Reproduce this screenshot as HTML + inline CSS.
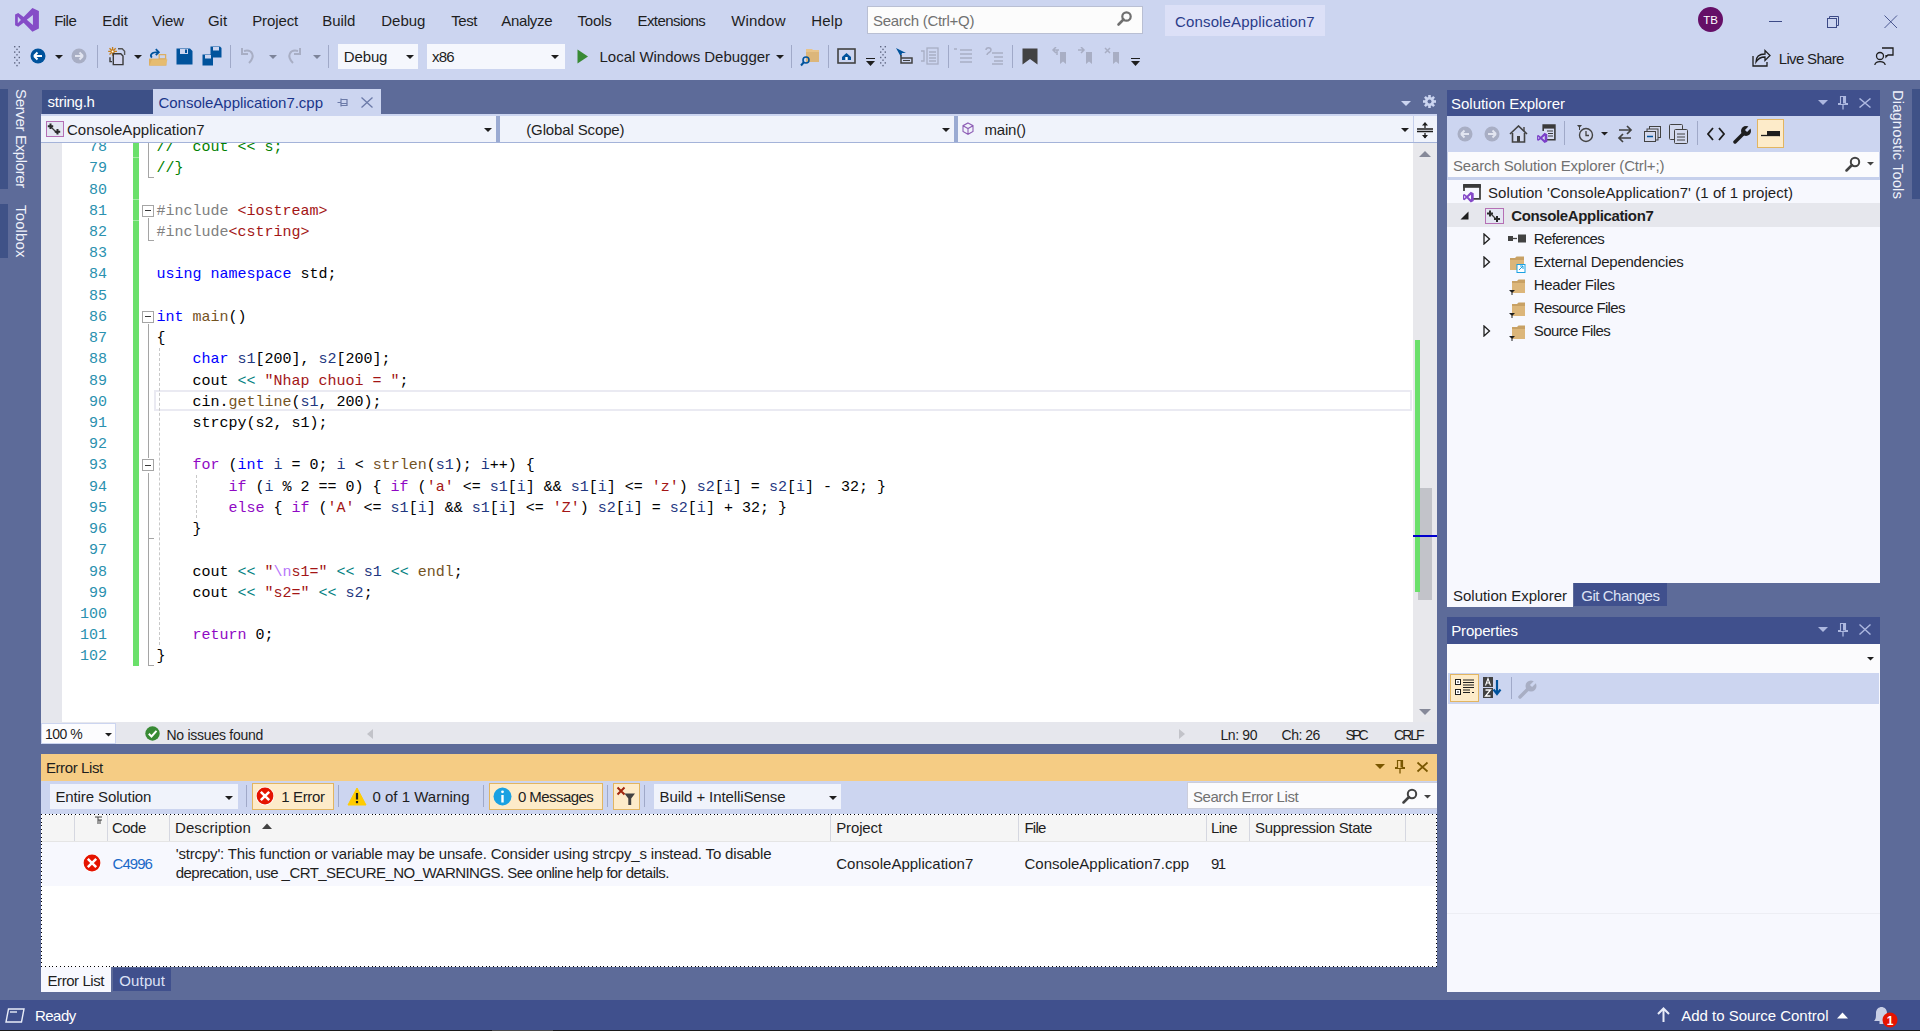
<!DOCTYPE html><html><head><meta charset="utf-8"><style>
html,body{margin:0;padding:0;}
body{width:1920px;height:1031px;position:relative;overflow:hidden;background:#CCD5F0;font-family:"Liberation Sans",sans-serif;}
body div{position:absolute;}
.t{white-space:pre;}
.code{font-family:"Liberation Mono",monospace;font-size:15px;white-space:pre;}
</style></head><body>

<div style="left:0px;top:0px;width:1920px;height:80px;background:#CCD5F0;"></div>
<svg style="position:absolute;left:14px;top:7px;" width="26" height="26" viewBox="0 0 26 26"><path d="M18.4 0.9 L24.9 4.1 V21.6 L18.4 24.8 L9.6 15.7 L4.2 19.7 L1.1 18.2 V7.4 L4.2 5.9 L9.6 10 Z M12.8 12.8 L18.9 7.9 V18 Z M3.8 9.6 L6.9 12.9 L3.8 16.2 Z" fill="#854CC7" fill-rule="evenodd"/></svg>
<div class="t" style="left:54.2px;top:13.30px;font-size:15px;line-height:15px;color:#1e1e1e;font-weight:normal;letter-spacing:-0.542px;">File</div>
<div class="t" style="left:102.3px;top:13.30px;font-size:15px;line-height:15px;color:#1e1e1e;font-weight:normal;letter-spacing:-0.092px;">Edit</div>
<div class="t" style="left:152.0px;top:13.30px;font-size:15px;line-height:15px;color:#1e1e1e;font-weight:normal;letter-spacing:-0.083px;">View</div>
<div class="t" style="left:208.0px;top:13.30px;font-size:15px;line-height:15px;color:#1e1e1e;font-weight:normal;letter-spacing:-0.062px;">Git</div>
<div class="t" style="left:252.2px;top:13.30px;font-size:15px;line-height:15px;color:#1e1e1e;font-weight:normal;letter-spacing:-0.104px;">Project</div>
<div class="t" style="left:322.2px;top:13.30px;font-size:15px;line-height:15px;color:#1e1e1e;font-weight:normal;letter-spacing:-0.019px;">Build</div>
<div class="t" style="left:381.3px;top:13.30px;font-size:15px;line-height:15px;color:#1e1e1e;font-weight:normal;letter-spacing:-0.012px;">Debug</div>
<div class="t" style="left:451.3px;top:13.30px;font-size:15px;line-height:15px;color:#1e1e1e;font-weight:normal;letter-spacing:-0.433px;">Test</div>
<div class="t" style="left:501.25px;top:13.30px;font-size:15px;line-height:15px;color:#1e1e1e;font-weight:normal;letter-spacing:-0.354px;">Analyze</div>
<div class="t" style="left:577.5px;top:13.30px;font-size:15px;line-height:15px;color:#1e1e1e;font-weight:normal;letter-spacing:-0.188px;">Tools</div>
<div class="t" style="left:637.5px;top:13.30px;font-size:15px;line-height:15px;color:#1e1e1e;font-weight:normal;letter-spacing:-0.569px;">Extensions</div>
<div class="t" style="left:731.25px;top:13.30px;font-size:15px;line-height:15px;color:#1e1e1e;font-weight:normal;letter-spacing:0.175px;">Window</div>
<div class="t" style="left:811.25px;top:13.30px;font-size:15px;line-height:15px;color:#1e1e1e;font-weight:normal;letter-spacing:0.125px;">Help</div>
<div style="left:867px;top:6px;width:276px;height:28px;background:#FCFCFC;box-sizing:border-box;border:1px solid #B9BFD3;"></div>
<div class="t" style="left:873.0px;top:13.30px;font-size:15px;line-height:15px;color:#717171;font-weight:normal;letter-spacing:-0.286px;">Search (Ctrl+Q)</div>
<svg style="position:absolute;left:1116px;top:9px;" width="18" height="18" viewBox="0 0 18 18"><circle cx="10.5" cy="7.5" r="4.2" fill="none" stroke="#6F6F6F" stroke-width="2.2"/><path d="M7.5 10.5 L2.5 15.5" stroke="#6F6F6F" stroke-width="2.6" stroke-linecap="round"/></svg>
<div style="left:1165px;top:5px;width:160px;height:31px;background:#DCE0F7;"></div>
<div class="t" style="left:1175.0px;top:14.30px;font-size:15px;line-height:15px;color:#2A3C8A;font-weight:normal;letter-spacing:0.153px;">ConsoleApplication7</div>
<svg style="position:absolute;left:1698px;top:7px;" width="26" height="26" viewBox="0 0 26 26"><circle cx="12.5" cy="12.5" r="12.5" fill="#650F67"/><text x="12.5" y="17" text-anchor="middle" font-family="Liberation Sans" font-size="11.5" fill="#fff">TB</text></svg>
<div style="left:1769px;top:21px;width:13px;height:1px;background:#3C4A86;"></div>
<svg style="position:absolute;left:1826px;top:15px;" width="14" height="14" viewBox="0 0 14 14"><rect x="1.5" y="3.5" width="9" height="9" fill="none" stroke="#3C4A86"/><path d="M3.5 3.5V1.5H12.5V10.5H10.5" fill="none" stroke="#3C4A86"/></svg>
<svg style="position:absolute;left:1884px;top:15px;" width="14" height="14" viewBox="0 0 14 14"><path d="M0.5 0.5L13 13M13 0.5L0.5 13" stroke="#3C4A86" stroke-width="0.9"/></svg>
<svg style="position:absolute;left:14px;top:46px;" width="6" height="21" viewBox="0 0 6 21"><rect x="0" y="0.0" width="1.4" height="1.4" fill="#5F6782"/><rect x="4.6" y="0.0" width="1.4" height="1.4" fill="#5F6782"/><rect x="2.3" y="2.7" width="1.4" height="1.4" fill="#5F6782"/><rect x="0" y="5.4" width="1.4" height="1.4" fill="#5F6782"/><rect x="4.6" y="5.4" width="1.4" height="1.4" fill="#5F6782"/><rect x="2.3" y="8.1" width="1.4" height="1.4" fill="#5F6782"/><rect x="0" y="10.8" width="1.4" height="1.4" fill="#5F6782"/><rect x="4.6" y="10.8" width="1.4" height="1.4" fill="#5F6782"/><rect x="2.3" y="13.5" width="1.4" height="1.4" fill="#5F6782"/><rect x="0" y="16.2" width="1.4" height="1.4" fill="#5F6782"/><rect x="4.6" y="16.2" width="1.4" height="1.4" fill="#5F6782"/><rect x="2.3" y="18.9" width="1.4" height="1.4" fill="#5F6782"/></svg>
<svg style="position:absolute;left:30px;top:48px;" width="16" height="16" viewBox="0 0 16 16"><circle cx="8" cy="8" r="7.5" fill="#00539C"/><path d="M4 8H12M4 8L7.5 4.5M4 8L7.5 11.5" stroke="#fff" stroke-width="2" fill="none"/></svg>
<svg style="position:absolute;left:55.0px;top:55px;" width="8" height="4.5" viewBox="0 0 8 4.5"><path d="M0 0H8L4.0 4.0Z" fill="#1e1e1e"/></svg>
<svg style="position:absolute;left:71px;top:48px;" width="16" height="16" viewBox="0 0 16 16"><circle cx="8" cy="8" r="7.5" fill="#A8AEC4"/><path d="M12 8H4M12 8L8.5 4.5M12 8L8.5 11.5" stroke="#E2E5F0" stroke-width="2" fill="none"/></svg>
<div style="left:97px;top:45px;width:1px;height:23px;background:#A0A9C8;"></div>
<svg style="position:absolute;left:104px;top:44px;" width="24" height="24" viewBox="0 0 24 24"><path d="M8.6 3V11.8M4.2 7.4H13M5.5 4.3L11.7 10.5M11.7 4.3L5.5 10.5" stroke="#C77F1C" stroke-width="1.3"/><circle cx="8.6" cy="7.4" r="1" fill="#fff"/><path d="M14 4.8H18.2L20.6 7.2V11" stroke="#555" stroke-width="1.4" fill="none"/><path d="M9.3 9.8H16.8L19 12V20.6H9.3Z" fill="#D3D6EE" stroke="#3A3A3A" stroke-width="1.4"/><path d="M6 13.2V17.6H8" stroke="#3A3A3A" stroke-width="1.4" fill="none"/></svg>
<svg style="position:absolute;left:133.5px;top:55px;" width="8" height="4.5" viewBox="0 0 8 4.5"><path d="M0 0H8L4.0 4.0Z" fill="#1e1e1e"/></svg>
<svg style="position:absolute;left:147px;top:46px;" width="22" height="22" viewBox="0 0 22 22"><path d="M12.2 8.6H18.6V12.8H12.2Z" fill="none" stroke="#DCAE62" stroke-width="1.3"/><path d="M2 12.6H19.5V19.6H2Z" fill="#DCAE62"/><path d="M2.5 19.6L5 13.5H20.5L18.5 19.6Z" fill="#E6BC70"/><path d="M4.8 11.6C2.5 9 4.5 6.2 11.4 6.2" stroke="#00539C" stroke-width="1.8" fill="none"/><path d="M8.8 3.2L11.8 6.2L8.8 9.2" stroke="#00539C" stroke-width="1.8" fill="none"/></svg>
<svg style="position:absolute;left:176px;top:48px;" width="17" height="17" viewBox="0 0 17 17"><path d="M0.5 0.5H14L16.5 3V16.5H0.5Z" fill="#00539C"/><rect x="4" y="1" width="8" height="5" fill="#CCD5F0"/><rect x="9" y="1.5" width="2" height="3.5" fill="#00539C"/></svg>
<svg style="position:absolute;left:202px;top:46px;" width="20" height="20" viewBox="0 0 20 20"><path d="M8.5 0.5H18L19.5 2V11.5H8.5Z" fill="#00539C"/><rect x="11" y="1" width="6" height="3.5" fill="#CCD5F0"/><path d="M0.5 8.5H9L11 10.5V19.5H0.5Z" fill="#00539C"/><rect x="3" y="9" width="6" height="3.5" fill="#CCD5F0"/></svg>
<div style="left:230px;top:45px;width:1px;height:23px;background:#A0A9C8;"></div>
<svg style="position:absolute;left:240px;top:47px;" width="17" height="18" viewBox="0 0 17 18"><path d="M4 4 C12 2 16 9 9 16" stroke="#A8AEC4" stroke-width="2" fill="none"/><path d="M2 1V7H8" stroke="#A8AEC4" stroke-width="2" fill="none"/></svg>
<svg style="position:absolute;left:268.5px;top:55px;" width="8" height="4.5" viewBox="0 0 8 4.5"><path d="M0 0H8L4.0 4.0Z" fill="#7D8499"/></svg>
<svg style="position:absolute;left:285px;top:47px;" width="17" height="18" viewBox="0 0 17 18"><path d="M13 4 C5 2 1 9 8 16" stroke="#A8AEC4" stroke-width="2" fill="none"/><path d="M15 1V7H9" stroke="#A8AEC4" stroke-width="2" fill="none"/></svg>
<svg style="position:absolute;left:312.5px;top:55px;" width="8" height="4.5" viewBox="0 0 8 4.5"><path d="M0 0H8L4.0 4.0Z" fill="#7D8499"/></svg>
<div style="left:328px;top:45px;width:1px;height:23px;background:#A0A9C8;"></div>
<div style="left:338px;top:44px;width:80px;height:25px;background:#F5F7FD;"></div>
<div class="t" style="left:343.75px;top:49.30px;font-size:15px;line-height:15px;color:#1e1e1e;font-weight:normal;letter-spacing:-0.125px;">Debug</div>
<svg style="position:absolute;left:406.0px;top:55px;" width="8" height="4.5" viewBox="0 0 8 4.5"><path d="M0 0H8L4.0 4.0Z" fill="#1e1e1e"/></svg>
<div style="left:427px;top:44px;width:138px;height:25px;background:#F5F7FD;"></div>
<div class="t" style="left:432.0px;top:49.30px;font-size:15px;line-height:15px;color:#1e1e1e;font-weight:normal;letter-spacing:-0.812px;">x86</div>
<svg style="position:absolute;left:551.0px;top:55px;" width="8" height="4.5" viewBox="0 0 8 4.5"><path d="M0 0H8L4.0 4.0Z" fill="#1e1e1e"/></svg>
<svg style="position:absolute;left:577px;top:49px;" width="12" height="15" viewBox="0 0 12 15"><path d="M0.5 0.5L11 7.5L0.5 14.5Z" fill="#388A34"/></svg>
<div class="t" style="left:599.5px;top:49.30px;font-size:15px;line-height:15px;color:#1e1e1e;font-weight:normal;letter-spacing:-0.018px;">Local Windows Debugger</div>
<svg style="position:absolute;left:776.0px;top:55px;" width="8" height="4.5" viewBox="0 0 8 4.5"><path d="M0 0H8L4.0 4.0Z" fill="#1e1e1e"/></svg>
<div style="left:791px;top:45px;width:1px;height:23px;background:#A0A9C8;"></div>
<svg style="position:absolute;left:800px;top:47px;" width="20" height="20" viewBox="0 0 20 20"><path d="M6 3H11L13 5H19V15H6Z" fill="#DCB67A"/><path d="M6 5V2H12L13 3H19V5" fill="#E8C48A"/><circle cx="6" cy="13" r="3" fill="none" stroke="#00539C" stroke-width="1.6"/><path d="M4 15L1 18.5" stroke="#00539C" stroke-width="2"/></svg>
<div style="left:828px;top:45px;width:1px;height:23px;background:#A0A9C8;"></div>
<svg style="position:absolute;left:837px;top:48px;" width="20" height="17" viewBox="0 0 20 17"><rect x="1" y="1" width="17" height="14" fill="none" stroke="#424242" stroke-width="1.6"/><path d="M5 9L9.5 5L14 9V12H5Z" fill="#00539C"/><rect x="8.3" y="9" width="2.4" height="3" fill="#fff"/></svg>
<svg style="position:absolute;left:865px;top:57px;" width="11" height="11" viewBox="0 0 11 11"><path d="M1 1.5H10" stroke="#1e1e1e"/><path d="M1 4H10L5.5 9Z" fill="#1e1e1e"/></svg>
<svg style="position:absolute;left:880px;top:46px;" width="6" height="22" viewBox="0 0 6 22"><rect x="0" y="0.0" width="1.4" height="1.4" fill="#5F6782"/><rect x="4.6" y="0.0" width="1.4" height="1.4" fill="#5F6782"/><rect x="2.3" y="2.7" width="1.4" height="1.4" fill="#5F6782"/><rect x="0" y="5.4" width="1.4" height="1.4" fill="#5F6782"/><rect x="4.6" y="5.4" width="1.4" height="1.4" fill="#5F6782"/><rect x="2.3" y="8.1" width="1.4" height="1.4" fill="#5F6782"/><rect x="0" y="10.8" width="1.4" height="1.4" fill="#5F6782"/><rect x="4.6" y="10.8" width="1.4" height="1.4" fill="#5F6782"/><rect x="2.3" y="13.5" width="1.4" height="1.4" fill="#5F6782"/><rect x="0" y="16.2" width="1.4" height="1.4" fill="#5F6782"/><rect x="4.6" y="16.2" width="1.4" height="1.4" fill="#5F6782"/><rect x="2.3" y="18.9" width="1.4" height="1.4" fill="#5F6782"/></svg>
<svg style="position:absolute;left:894px;top:47px;" width="20" height="18" viewBox="0 0 20 18"><path d="M2 1L7 10L8 6L12 6Z" fill="#00539C"/><path d="M7 8V11H18V16H7V11" fill="none" stroke="#424242" stroke-width="1.5"/><path d="M9 13.5H16" stroke="#424242"/></svg>
<svg style="position:absolute;left:920px;top:47px;" width="20" height="18" viewBox="0 0 20 18"><g stroke="#A8AEC4" fill="none" stroke-width="1.3"><path d="M1 4H4V14H1"/><rect x="7" y="1" width="11" height="16"/><path d="M9 5H16M9 8H16M9 11H16M9 14H16"/></g></svg>
<div style="left:948px;top:45px;width:1px;height:23px;background:#A0A9C8;"></div>
<svg style="position:absolute;left:952px;top:47px;" width="22" height="18" viewBox="0 0 22 18"><g stroke="#A8AEC4" stroke-width="1.5"><path d="M8 3H20M8 7H20M8 11H20M8 15H20"/><path d="M2 2H5"/></g></svg>
<svg style="position:absolute;left:984px;top:47px;" width="20" height="18" viewBox="0 0 20 18"><g stroke="#A8AEC4" stroke-width="1.5" fill="none"><path d="M8 6H19M10 10H19M10 14H19M8 17H19"/><path d="M2 3C2 0 7 0 7 3C7 6 3 5 3 8"/></g></svg>
<div style="left:1012px;top:45px;width:1px;height:23px;background:#A0A9C8;"></div>
<svg style="position:absolute;left:1022px;top:48px;" width="16" height="17" viewBox="0 0 16 17"><path d="M0.5 0.5H15.5V16.5L8 11L0.5 16.5Z" fill="#424242"/></svg>
<svg style="position:absolute;left:1051px;top:47px;" width="17" height="18" viewBox="0 0 17 18"><path d="M9 5H15V17L12 14.5L9 17Z" fill="#A8AEC4"/><path d="M8 3H2M5 0L2 3L5 6M6 3V8" stroke="#A8AEC4" stroke-width="1.5" fill="none"/></svg>
<svg style="position:absolute;left:1077px;top:47px;" width="17" height="18" viewBox="0 0 17 18"><path d="M9 5H15V17L12 14.5L9 17Z" fill="#A8AEC4"/><path d="M1 3H7M4 0L7 3L4 6" stroke="#A8AEC4" stroke-width="1.5" fill="none"/></svg>
<svg style="position:absolute;left:1104px;top:47px;" width="17" height="18" viewBox="0 0 17 18"><path d="M9 5H15V17L12 14.5L9 17Z" fill="#A8AEC4"/><path d="M1 1L6 6M6 1L1 6" stroke="#A8AEC4" stroke-width="1.5" fill="none"/></svg>
<svg style="position:absolute;left:1130px;top:57px;" width="11" height="11" viewBox="0 0 11 11"><path d="M1 1.5H10" stroke="#1e1e1e"/><path d="M1 4H10L5.5 9Z" fill="#1e1e1e"/></svg>
<svg style="position:absolute;left:1752px;top:48px;" width="19" height="19" viewBox="0 0 19 19"><path d="M1 8V18H15V14" stroke="#1e1e1e" stroke-width="1.3" fill="none"/><path d="M4 14C4 8 8 6 13 6V2.5L18 7.5L13 12.5V9C9 9 6 10.5 4 14Z" fill="none" stroke="#1e1e1e" stroke-width="1.3"/></svg>
<div class="t" style="left:1778.75px;top:51.30px;font-size:15px;line-height:15px;color:#1e1e1e;font-weight:normal;letter-spacing:-0.667px;">Live Share</div>
<svg style="position:absolute;left:1874px;top:47px;" width="20" height="20" viewBox="0 0 20 20"><circle cx="6" cy="9" r="3.5" fill="none" stroke="#1e1e1e" stroke-width="1.3"/><path d="M0.8 18C1.5 13.5 10.5 13.5 11.2 18" fill="none" stroke="#1e1e1e" stroke-width="1.3"/><path d="M8 1H19V8H14L12 10V8" fill="none" stroke="#1e1e1e" stroke-width="1.3"/></svg>
<div style="left:0px;top:80px;width:1920px;height:920px;background:#5D6B99;"></div>
<div style="left:0px;top:89px;width:8px;height:100px;background:#3F5287;"></div>
<div style="left:0px;top:204px;width:8px;height:54px;background:#3F5287;"></div>
<div class="t" style="left:11px;top:89.2px;writing-mode:vertical-rl;font-size:15px;line-height:20px;color:#F0F2FA;letter-spacing:-0.346px;">Server Explorer</div>
<div class="t" style="left:11px;top:205.0px;writing-mode:vertical-rl;font-size:15px;line-height:20px;color:#F0F2FA;letter-spacing:0.142px;">Toolbox</div>
<div style="left:42px;top:90px;width:111px;height:24px;background:#3D5087;"></div>
<div class="t" style="left:47.5px;top:94.30px;font-size:15px;line-height:15px;color:#FFFFFF;font-weight:normal;letter-spacing:-0.250px;">string.h</div>
<div style="left:153px;top:89px;width:228px;height:25px;background:#CCD5F0;"></div>
<div class="t" style="left:158.5px;top:95.30px;font-size:15px;line-height:15px;color:#1B358A;font-weight:normal;letter-spacing:-0.028px;">ConsoleApplication7.cpp</div>
<svg style="position:absolute;left:337px;top:97px;" width="12" height="11" viewBox="0 0 12 11"><path d="M0.5 5.5H4M4 1.5V9.5M4 2.5H10V8.5H4M4 6.5H10" stroke="#6B7AA8" stroke-width="1.2" fill="none"/></svg>
<svg style="position:absolute;left:361px;top:97px;" width="12" height="11" viewBox="0 0 12 11"><path d="M0.5 0.5L11.5 10.5M11.5 0.5L0.5 10.5" stroke="#6B7AA8" stroke-width="1.3"/></svg>
<svg style="position:absolute;left:1400.5px;top:101px;" width="10" height="5.5" viewBox="0 0 10 5.5"><path d="M0 0H10L5.0 5.0Z" fill="#CCD5F0"/></svg>
<svg style="position:absolute;left:1423px;top:95px;" width="13" height="13" viewBox="0 0 13 13"><g fill="#CCD5F0"><circle cx="6.5" cy="6.5" r="4.6"/><rect x="5.2" y="0" width="2.6" height="13" transform="rotate(0 6.5 6.5)"/><rect x="5.2" y="0" width="2.6" height="13" transform="rotate(45 6.5 6.5)"/><rect x="5.2" y="0" width="2.6" height="13" transform="rotate(90 6.5 6.5)"/><rect x="5.2" y="0" width="2.6" height="13" transform="rotate(135 6.5 6.5)"/></g><circle cx="6.5" cy="6.5" r="2" fill="#5D6B99"/></svg>
<div style="left:41px;top:114px;width:1396px;height:2px;background:#CCD5F0;"></div>
<div style="left:41px;top:116px;width:1396px;height:26px;background:#F0F3FB;"></div>
<div style="left:41px;top:142px;width:1396px;height:1px;background:#A4B3D9;"></div>
<div style="left:496px;top:116px;width:4px;height:26px;background:#9AAAD2;"></div>
<div style="left:954px;top:116px;width:4px;height:26px;background:#9AAAD2;"></div>
<div style="left:1413px;top:116px;width:1px;height:26px;background:#C6D0EC;"></div>
<svg style="position:absolute;left:46px;top:121px;" width="18" height="16" viewBox="0 0 18 16"><rect x="0.5" y="0.5" width="17" height="15" fill="#E4E6F2" stroke="#B56FB5"/><path d="M4 5L11 12" stroke="#3a3a3a" stroke-width="1.3"/><path d="M4.5 2.5V8M1.8 5.3H7.2M11.5 8V13.5M8.8 10.8H14.2" stroke="#2a2a2a" stroke-width="2"/></svg>
<div class="t" style="left:67.0px;top:122.30px;font-size:15px;line-height:15px;color:#1e1e1e;font-weight:normal;letter-spacing:0.042px;">ConsoleApplication7</div>
<svg style="position:absolute;left:483.5px;top:127.5px;" width="8" height="4.5" viewBox="0 0 8 4.5"><path d="M0 0H8L4.0 4.0Z" fill="#1e1e1e"/></svg>
<div class="t" style="left:526.25px;top:122.30px;font-size:15px;line-height:15px;color:#1e1e1e;font-weight:normal;letter-spacing:-0.135px;">(Global Scope)</div>
<svg style="position:absolute;left:941.5px;top:128px;" width="8" height="4.5" viewBox="0 0 8 4.5"><path d="M0 0H8L4.0 4.0Z" fill="#1e1e1e"/></svg>
<svg style="position:absolute;left:962px;top:122px;" width="12" height="14" viewBox="0 0 12 14"><path d="M6 1L11 3.7V9.5L6 12.3L1 9.5V3.7Z M1 3.7L6 6.5L11 3.7M6 6.5V12.3" stroke="#8E5EB5" stroke-width="1.1" fill="none"/></svg>
<div class="t" style="left:984.6px;top:122.30px;font-size:15px;line-height:15px;color:#1e1e1e;font-weight:normal;letter-spacing:-0.220px;">main()</div>
<svg style="position:absolute;left:1400.5px;top:128px;" width="8" height="4.5" viewBox="0 0 8 4.5"><path d="M0 0H8L4.0 4.0Z" fill="#1e1e1e"/></svg>
<svg style="position:absolute;left:1416px;top:121px;" width="18" height="18" viewBox="0 0 18 18"><path d="M1 8H17M1 10.5H17" stroke="#1e1e1e" stroke-width="1.5"/><path d="M9 2V7M9 12V17" stroke="#1e1e1e" stroke-width="1.3"/><path d="M6 4.5L9 1L12 4.5Z M6 14L9 17.5L12 14Z" fill="#1e1e1e"/></svg>
<div style="left:41px;top:143px;width:1373px;height:579px;background:#FFFFFF;"></div>
<div style="left:41px;top:143px;width:21px;height:579px;background:#E6E7ED;"></div>
<div style="left:1413px;top:143px;width:24px;height:579px;background:#E8E8EC;"></div>
<svg style="position:absolute;left:1419px;top:150px;" width="12" height="8" viewBox="0 0 12 8"><path d="M0 7L6 1L12 7Z" fill="#868999"/></svg>
<svg style="position:absolute;left:1419px;top:709px;" width="12" height="7" viewBox="0 0 12 7"><path d="M0 0H12L6 6Z" fill="#868999"/></svg>
<div style="left:1418px;top:488px;width:14px;height:112px;background:#C2C3C9;"></div>
<div style="left:1415px;top:340px;width:5px;height:252px;background:#6BE06B;"></div>
<div style="left:1413px;top:535px;width:24px;height:2px;background:#0000CD;"></div>
<div style="left:41px;top:143px;width:1372px;height:579px;overflow:hidden;">
<div style="left:113px;top:247.48px;width:1258px;height:21px;box-sizing:border-box;border:2px solid #EAEAF2;"></div>
<div style="left:92px;top:0px;width:6px;height:523.34px;background:#6BE06B;"></div>
<div style="left:92px;top:13.56px;width:6px;height:1px;background:#A6EBA6;"></div>
<div style="left:92px;top:56.00px;width:6px;height:1px;background:#A6EBA6;"></div>
<div style="left:92px;top:77.22px;width:6px;height:1px;background:#A6EBA6;"></div>
<div class="code" style="left:21px;top:-5.86px;width:45px;text-align:right;line-height:21.22px;color:#2B91AF;">78</div>
<div class="code" style="left:115.5px;top:-5.86px;line-height:21.22px;color:#000;"><span style="color:#008000">//  cout &lt;&lt; s;</span></div>
<div class="code" style="left:21px;top:15.36px;width:45px;text-align:right;line-height:21.22px;color:#2B91AF;">79</div>
<div class="code" style="left:115.5px;top:15.36px;line-height:21.22px;color:#000;"><span style="color:#008000">//}</span></div>
<div class="code" style="left:21px;top:36.58px;width:45px;text-align:right;line-height:21.22px;color:#2B91AF;">80</div>
<div class="code" style="left:115.5px;top:36.58px;line-height:21.22px;color:#000;"></div>
<div class="code" style="left:21px;top:57.80px;width:45px;text-align:right;line-height:21.22px;color:#2B91AF;">81</div>
<div class="code" style="left:115.5px;top:57.80px;line-height:21.22px;color:#000;"><span style="color:#808080">#include </span><span style="color:#A31515">&lt;iostream&gt;</span></div>
<div class="code" style="left:21px;top:79.02px;width:45px;text-align:right;line-height:21.22px;color:#2B91AF;">82</div>
<div class="code" style="left:115.5px;top:79.02px;line-height:21.22px;color:#000;"><span style="color:#808080">#include</span><span style="color:#A31515">&lt;cstring&gt;</span></div>
<div class="code" style="left:21px;top:100.24px;width:45px;text-align:right;line-height:21.22px;color:#2B91AF;">83</div>
<div class="code" style="left:115.5px;top:100.24px;line-height:21.22px;color:#000;"></div>
<div class="code" style="left:21px;top:121.46px;width:45px;text-align:right;line-height:21.22px;color:#2B91AF;">84</div>
<div class="code" style="left:115.5px;top:121.46px;line-height:21.22px;color:#000;"><span style="color:#0000FF">using</span> <span style="color:#0000FF">namespace</span> std;</div>
<div class="code" style="left:21px;top:142.68px;width:45px;text-align:right;line-height:21.22px;color:#2B91AF;">85</div>
<div class="code" style="left:115.5px;top:142.68px;line-height:21.22px;color:#000;"></div>
<div class="code" style="left:21px;top:163.90px;width:45px;text-align:right;line-height:21.22px;color:#2B91AF;">86</div>
<div class="code" style="left:115.5px;top:163.90px;line-height:21.22px;color:#000;"><span style="color:#0000FF">int</span> <span style="color:#74531F">main</span>()</div>
<div class="code" style="left:21px;top:185.12px;width:45px;text-align:right;line-height:21.22px;color:#2B91AF;">87</div>
<div class="code" style="left:115.5px;top:185.12px;line-height:21.22px;color:#000;">{</div>
<div class="code" style="left:21px;top:206.34px;width:45px;text-align:right;line-height:21.22px;color:#2B91AF;">88</div>
<div class="code" style="left:115.5px;top:206.34px;line-height:21.22px;color:#000;">    <span style="color:#0000FF">char</span> <span style="color:#1F377F">s1</span>[200], <span style="color:#1F377F">s2</span>[200];</div>
<div class="code" style="left:21px;top:227.56px;width:45px;text-align:right;line-height:21.22px;color:#2B91AF;">89</div>
<div class="code" style="left:115.5px;top:227.56px;line-height:21.22px;color:#000;">    cout <span style="color:#008080">&lt;&lt;</span> <span style="color:#A31515">&quot;Nhap chuoi = &quot;</span>;</div>
<div class="code" style="left:21px;top:248.78px;width:45px;text-align:right;line-height:21.22px;color:#2B91AF;">90</div>
<div class="code" style="left:115.5px;top:248.78px;line-height:21.22px;color:#000;">    cin.<span style="color:#74531F">getline</span>(<span style="color:#1F377F">s1</span>, 200);</div>
<div class="code" style="left:21px;top:270.00px;width:45px;text-align:right;line-height:21.22px;color:#2B91AF;">91</div>
<div class="code" style="left:115.5px;top:270.00px;line-height:21.22px;color:#000;">    strcpy(s2, s1);</div>
<div class="code" style="left:21px;top:291.22px;width:45px;text-align:right;line-height:21.22px;color:#2B91AF;">92</div>
<div class="code" style="left:115.5px;top:291.22px;line-height:21.22px;color:#000;"></div>
<div class="code" style="left:21px;top:312.44px;width:45px;text-align:right;line-height:21.22px;color:#2B91AF;">93</div>
<div class="code" style="left:115.5px;top:312.44px;line-height:21.22px;color:#000;">    <span style="color:#8F08C4">for</span> (<span style="color:#0000FF">int</span> <span style="color:#1F377F">i</span> = 0; <span style="color:#1F377F">i</span> &lt; <span style="color:#74531F">strlen</span>(<span style="color:#1F377F">s1</span>); <span style="color:#1F377F">i</span>++) {</div>
<div class="code" style="left:21px;top:333.66px;width:45px;text-align:right;line-height:21.22px;color:#2B91AF;">94</div>
<div class="code" style="left:115.5px;top:333.66px;line-height:21.22px;color:#000;">        <span style="color:#8F08C4">if</span> (<span style="color:#1F377F">i</span> % 2 == 0) { <span style="color:#8F08C4">if</span> (<span style="color:#A31515">&#x27;a&#x27;</span> &lt;= <span style="color:#1F377F">s1</span>[<span style="color:#1F377F">i</span>] &amp;&amp; <span style="color:#1F377F">s1</span>[<span style="color:#1F377F">i</span>] &lt;= <span style="color:#A31515">&#x27;z&#x27;</span>) <span style="color:#1F377F">s2</span>[<span style="color:#1F377F">i</span>] = <span style="color:#1F377F">s2</span>[<span style="color:#1F377F">i</span>] - 32; }</div>
<div class="code" style="left:21px;top:354.88px;width:45px;text-align:right;line-height:21.22px;color:#2B91AF;">95</div>
<div class="code" style="left:115.5px;top:354.88px;line-height:21.22px;color:#000;">        <span style="color:#8F08C4">else</span> { <span style="color:#8F08C4">if</span> (<span style="color:#A31515">&#x27;A&#x27;</span> &lt;= <span style="color:#1F377F">s1</span>[<span style="color:#1F377F">i</span>] &amp;&amp; <span style="color:#1F377F">s1</span>[<span style="color:#1F377F">i</span>] &lt;= <span style="color:#A31515">&#x27;Z&#x27;</span>) <span style="color:#1F377F">s2</span>[<span style="color:#1F377F">i</span>] = <span style="color:#1F377F">s2</span>[<span style="color:#1F377F">i</span>] + 32; }</div>
<div class="code" style="left:21px;top:376.10px;width:45px;text-align:right;line-height:21.22px;color:#2B91AF;">96</div>
<div class="code" style="left:115.5px;top:376.10px;line-height:21.22px;color:#000;">    }</div>
<div class="code" style="left:21px;top:397.32px;width:45px;text-align:right;line-height:21.22px;color:#2B91AF;">97</div>
<div class="code" style="left:115.5px;top:397.32px;line-height:21.22px;color:#000;"></div>
<div class="code" style="left:21px;top:418.54px;width:45px;text-align:right;line-height:21.22px;color:#2B91AF;">98</div>
<div class="code" style="left:115.5px;top:418.54px;line-height:21.22px;color:#000;">    cout <span style="color:#008080">&lt;&lt;</span> <span style="color:#A31515">&quot;</span><span style="color:#B776FB">\n</span><span style="color:#A31515">s1=&quot;</span> <span style="color:#008080">&lt;&lt;</span> <span style="color:#1F377F">s1</span> <span style="color:#008080">&lt;&lt;</span> <span style="color:#74531F">endl</span>;</div>
<div class="code" style="left:21px;top:439.76px;width:45px;text-align:right;line-height:21.22px;color:#2B91AF;">99</div>
<div class="code" style="left:115.5px;top:439.76px;line-height:21.22px;color:#000;">    cout <span style="color:#008080">&lt;&lt;</span> <span style="color:#A31515">&quot;s2=&quot;</span> <span style="color:#008080">&lt;&lt;</span> <span style="color:#1F377F">s2</span>;</div>
<div class="code" style="left:21px;top:460.98px;width:45px;text-align:right;line-height:21.22px;color:#2B91AF;">100</div>
<div class="code" style="left:115.5px;top:460.98px;line-height:21.22px;color:#000;"></div>
<div class="code" style="left:21px;top:482.20px;width:45px;text-align:right;line-height:21.22px;color:#2B91AF;">101</div>
<div class="code" style="left:115.5px;top:482.20px;line-height:21.22px;color:#000;">    <span style="color:#8F08C4">return</span> 0;</div>
<div class="code" style="left:21px;top:503.42px;width:45px;text-align:right;line-height:21.22px;color:#2B91AF;">102</div>
<div class="code" style="left:115.5px;top:503.42px;line-height:21.22px;color:#000;">}</div>
<div style="left:107px;top:0.00px;width:1px;height:33.78px;background:#A5A5A5;"></div>
<div style="left:107px;top:33.78px;width:6px;height:1px;background:#A5A5A5;"></div>
<div style="left:101px;top:61.50px;width:12px;height:12px;box-sizing:border-box;border:1px solid #A5A5A5;background:#fff;"></div>
<div style="left:104px;top:67.00px;width:6px;height:1.3px;background:#3a3a3a;"></div>
<div style="left:107px;top:75.00px;width:1px;height:22.44px;background:#A5A5A5;"></div>
<div style="left:107px;top:97.44px;width:6px;height:1px;background:#A5A5A5;"></div>
<div style="left:101px;top:167.60px;width:12px;height:12px;box-sizing:border-box;border:1px solid #A5A5A5;background:#fff;"></div>
<div style="left:104px;top:173.10px;width:6px;height:1.3px;background:#3a3a3a;"></div>
<div style="left:107px;top:181.10px;width:1px;height:133.54px;background:#A5A5A5;"></div>
<div style="left:107px;top:396.02px;width:1px;height:125.82px;background:#A5A5A5;"></div>
<div style="left:107px;top:521.84px;width:6px;height:1px;background:#A5A5A5;"></div>
<div style="left:101px;top:316.14px;width:12px;height:12px;box-sizing:border-box;border:1px solid #A5A5A5;background:#fff;"></div>
<div style="left:104px;top:321.64px;width:6px;height:1.3px;background:#3a3a3a;"></div>
<div style="left:107px;top:329.64px;width:1px;height:64.88px;background:#A5A5A5;"></div>
<div style="left:107px;top:394.52px;width:6px;height:1px;background:#A5A5A5;"></div>
<div style="left:118px;top:205.04px;width:0;height:297.08px;border-left:1px dashed #C8C8C8;"></div>
<div style="left:155px;top:332.36px;width:0;height:42.44px;border-left:1px dashed #C8C8C8;"></div>
</div>
<div style="left:41px;top:722px;width:1396px;height:22px;background:#E6E7ED;"></div>
<div style="left:41px;top:723px;width:75px;height:21px;background:#FCFCFE;box-sizing:border-box;border:1px solid #CCD5F0;"></div>
<div class="t" style="left:45.0px;top:727.15px;font-size:14px;line-height:14px;color:#1e1e1e;font-weight:normal;letter-spacing:-0.488px;">100 %</div>
<svg style="position:absolute;left:105.0px;top:732.5px;" width="7" height="4.0" viewBox="0 0 7 4.0"><path d="M0 0H7L3.5 3.5Z" fill="#1e1e1e"/></svg>
<svg style="position:absolute;left:145px;top:726px;" width="15" height="15" viewBox="0 0 15 15"><circle cx="7.5" cy="7.5" r="7.2" fill="#388A34"/><path d="M3.8 7.8L6.5 10.5L11.5 4.8" stroke="#fff" stroke-width="2" fill="none"/></svg>
<div class="t" style="left:166.4px;top:728.15px;font-size:14px;line-height:14px;color:#1e1e1e;font-weight:normal;letter-spacing:-0.241px;">No issues found</div>
<svg style="position:absolute;left:367px;top:729px;" width="6" height="10" viewBox="0 0 6 10"><path d="M6 0V10L0 5Z" fill="#C2C3C9"/></svg>
<svg style="position:absolute;left:1179px;top:729px;" width="6" height="10" viewBox="0 0 6 10"><path d="M0 0V10L6 5Z" fill="#C2C3C9"/></svg>
<div class="t" style="left:1220.4px;top:728.15px;font-size:14px;line-height:14px;color:#1e1e1e;font-weight:normal;letter-spacing:-0.375px;">Ln: 90</div>
<div class="t" style="left:1281.6px;top:728.15px;font-size:14px;line-height:14px;color:#1e1e1e;font-weight:normal;letter-spacing:-0.490px;">Ch: 26</div>
<div class="t" style="left:1345.5px;top:728.15px;font-size:14px;line-height:14px;color:#1e1e1e;font-weight:normal;letter-spacing:-2.875px;">SPC</div>
<div class="t" style="left:1394.0px;top:728.15px;font-size:14px;line-height:14px;color:#1e1e1e;font-weight:normal;letter-spacing:-1.975px;">CRLF</div>
<div style="left:41px;top:754px;width:1396px;height:27px;background:#F5CC84;"></div>
<div class="t" style="left:45.9px;top:760.30px;font-size:15px;line-height:15px;color:#1e1e1e;font-weight:normal;letter-spacing:-0.397px;">Error List</div>
<svg style="position:absolute;left:1374.5px;top:764px;" width="10" height="5.5" viewBox="0 0 10 5.5"><path d="M0 0H10L5.0 5.0Z" fill="#7A5700"/></svg>
<svg style="position:absolute;left:1395px;top:760px;" width="10" height="14" viewBox="0 0 10 14"><path d="M2.5 0.5H7.5V7.5H9.5V8.5H0.5V7.5H2.5Z" fill="none" stroke="#7A5700" stroke-width="1.2"/><path d="M5 8.5V13.5" stroke="#7A5700" stroke-width="1.3"/><rect x="5.5" y="1" width="1.8" height="6.5" fill="#7A5700"/></svg>
<svg style="position:absolute;left:1416px;top:761px;" width="13" height="12" viewBox="0 0 13 12"><path d="M1.5 1.5L11.5 10.5M11.5 1.5L1.5 10.5" stroke="#7A5700" stroke-width="1.7"/></svg>
<div style="left:41px;top:781px;width:1396px;height:33px;background:#CCD5F0;"></div>
<div style="left:50px;top:784px;width:188px;height:25px;background:#F0F3FB;"></div>
<div class="t" style="left:55.4px;top:789.30px;font-size:15px;line-height:15px;color:#1e1e1e;font-weight:normal;letter-spacing:-0.107px;">Entire Solution</div>
<svg style="position:absolute;left:224.5px;top:796px;" width="8" height="4.5" viewBox="0 0 8 4.5"><path d="M0 0H8L4.0 4.0Z" fill="#1e1e1e"/></svg>
<div style="left:246px;top:785px;width:1px;height:22px;background:#A0A9C8;"></div>
<div style="left:252px;top:783px;width:82px;height:27px;background:#FDEBC9;box-sizing:border-box;border:1px solid #E2B561;"></div>
<svg style="position:absolute;left:255px;top:786px;" width="20" height="20" viewBox="0 0 20 20"><circle cx="10" cy="10" r="9.2" fill="#fff"/><circle cx="10" cy="10" r="8.4" fill="#E51400"/><path d="M5.8 5.8L14.2 14.2M14.2 5.8L5.8 14.2" stroke="#fff" stroke-width="2.5"/></svg>
<div class="t" style="left:281.25px;top:789.30px;font-size:15px;line-height:15px;color:#1e1e1e;font-weight:normal;letter-spacing:-0.354px;">1 Error</div>
<div style="left:338px;top:785px;width:1px;height:22px;background:#A0A9C8;"></div>
<svg style="position:absolute;left:347px;top:787px;" width="20" height="19" viewBox="0 0 20 19"><path d="M10 1L19 18H1Z" fill="#FFCC00" stroke="#FFCC00" stroke-linejoin="round"/><path d="M10 6V12.5" stroke="#1e1e1e" stroke-width="2.2"/><rect x="8.9" y="14" width="2.2" height="2.2" fill="#1e1e1e"/></svg>
<div class="t" style="left:372.5px;top:789.30px;font-size:15px;line-height:15px;color:#1e1e1e;font-weight:normal;letter-spacing:0.000px;">0 of 1 Warning</div>
<div style="left:483px;top:785px;width:1px;height:22px;background:#A0A9C8;"></div>
<div style="left:489px;top:783px;width:114px;height:27px;background:#FDEBC9;box-sizing:border-box;border:1px solid #E2B561;"></div>
<svg style="position:absolute;left:493px;top:787px;" width="19" height="19" viewBox="0 0 19 19"><circle cx="9.5" cy="9.5" r="9" fill="#1BA1E2"/><path d="M9.5 8V15.5" stroke="#fff" stroke-width="2.4"/><circle cx="9.5" cy="4.8" r="1.4" fill="#fff"/></svg>
<div class="t" style="left:518.0px;top:789.30px;font-size:15px;line-height:15px;color:#1e1e1e;font-weight:normal;letter-spacing:-0.569px;">0 Messages</div>
<div style="left:607px;top:785px;width:1px;height:22px;background:#A0A9C8;"></div>
<div style="left:613px;top:783px;width:27px;height:27px;background:#FDEBC9;box-sizing:border-box;border:1px solid #E2B561;"></div>
<svg style="position:absolute;left:616px;top:786px;" width="20" height="20" viewBox="0 0 20 20"><path d="M1.5 1.5L8.5 8.5M8.5 1.5L1.5 8.5" stroke="#A1260D" stroke-width="2"/><path d="M8.5 7.5H19L15.2 12.5V19H12.3V12.5Z" fill="#424242"/></svg>
<div style="left:644px;top:785px;width:1px;height:22px;background:#A0A9C8;"></div>
<div style="left:654px;top:784px;width:187px;height:25px;background:#F0F3FB;"></div>
<div class="t" style="left:659.5px;top:789.30px;font-size:15px;line-height:15px;color:#1e1e1e;font-weight:normal;letter-spacing:-0.105px;">Build + IntelliSense</div>
<svg style="position:absolute;left:828.5px;top:796px;" width="8" height="4.5" viewBox="0 0 8 4.5"><path d="M0 0H8L4.0 4.0Z" fill="#1e1e1e"/></svg>
<div style="left:1187px;top:782px;width:250px;height:27px;background:#FBFBFD;box-sizing:border-box;border:1px solid #CCCEDB;border-right:none;"></div>
<div class="t" style="left:1192.9px;top:789.30px;font-size:15px;line-height:15px;color:#717171;font-weight:normal;letter-spacing:-0.425px;">Search Error List</div>
<svg style="position:absolute;left:1401px;top:788px;" width="18" height="16" viewBox="0 0 18 16"><circle cx="11" cy="6" r="4.2" fill="none" stroke="#424242" stroke-width="2"/><path d="M8 9L2.5 14.5" stroke="#424242" stroke-width="2.5" stroke-linecap="round"/></svg>
<svg style="position:absolute;left:1423.5px;top:795px;" width="7" height="4.0" viewBox="0 0 7 4.0"><path d="M0 0H7L3.5 3.5Z" fill="#424242"/></svg>
<div style="left:41px;top:814px;width:1396px;height:153px;background:#FFFFFF;"></div>
<div style="left:41px;top:814px;width:1396px;height:1px;background:repeating-linear-gradient(to right,#000 0 1px,#fff 1px 3.8px);"></div>
<div style="left:41px;top:966px;width:1396px;height:1px;background:repeating-linear-gradient(to right,#000 0 1px,#fff 1px 3.8px);"></div>
<div style="left:41px;top:814px;width:1px;height:153px;background:repeating-linear-gradient(to bottom,#000 0 1px,#fff 1px 3.8px);"></div>
<div style="left:1436px;top:814px;width:1px;height:153px;background:repeating-linear-gradient(to bottom,#000 0 1px,#fff 1px 3.8px);"></div>
<div style="left:42px;top:815px;width:1394px;height:26px;background:#F5F5F5;"></div>
<div style="left:42px;top:841px;width:1394px;height:1px;background:#E5E5E5;"></div>
<div style="left:74px;top:815px;width:1px;height:26px;background:#D5D7E0;"></div>
<div style="left:107px;top:815px;width:1px;height:26px;background:#D5D7E0;"></div>
<div style="left:169px;top:815px;width:1px;height:26px;background:#D5D7E0;"></div>
<div style="left:830px;top:815px;width:1px;height:26px;background:#D5D7E0;"></div>
<div style="left:1018px;top:815px;width:1px;height:26px;background:#D5D7E0;"></div>
<div style="left:1206px;top:815px;width:1px;height:26px;background:#D5D7E0;"></div>
<div style="left:1249px;top:815px;width:1px;height:26px;background:#D5D7E0;"></div>
<div style="left:1405px;top:815px;width:1px;height:26px;background:#D5D7E0;"></div>
<svg style="position:absolute;left:94px;top:816px;" width="9" height="9" viewBox="0 0 9 9"><path d="M1 1H8M4 1V8M4 4H8M6 4V8" stroke="#424242" stroke-width="1"/></svg>
<div class="t" style="left:112.0px;top:820.30px;font-size:15px;line-height:15px;color:#1e1e1e;font-weight:normal;letter-spacing:-0.542px;">Code</div>
<div class="t" style="left:175.0px;top:820.30px;font-size:15px;line-height:15px;color:#1e1e1e;font-weight:normal;letter-spacing:0.075px;">Description</div>
<svg style="position:absolute;left:262px;top:823px;" width="10" height="6" viewBox="0 0 10 6"><path d="M0 6L5 0.5L10 6Z" fill="#424242"/></svg>
<div class="t" style="left:836.25px;top:820.30px;font-size:15px;line-height:15px;color:#1e1e1e;font-weight:normal;letter-spacing:-0.146px;">Project</div>
<div class="t" style="left:1024.5px;top:820.30px;font-size:15px;line-height:15px;color:#1e1e1e;font-weight:normal;letter-spacing:-0.808px;">File</div>
<div class="t" style="left:1211.0px;top:820.30px;font-size:15px;line-height:15px;color:#1e1e1e;font-weight:normal;letter-spacing:-0.625px;">Line</div>
<div class="t" style="left:1255.0px;top:820.30px;font-size:15px;line-height:15px;color:#1e1e1e;font-weight:normal;letter-spacing:-0.327px;">Suppression State</div>
<div style="left:42px;top:842px;width:1394px;height:44px;background:#F7F8FE;"></div>
<svg style="position:absolute;left:82px;top:853px;" width="20" height="20" viewBox="0 0 20 20"><circle cx="10" cy="10" r="9.2" fill="#fff"/><circle cx="10" cy="10" r="8.4" fill="#E51400"/><path d="M5.8 5.8L14.2 14.2M14.2 5.8L5.8 14.2" stroke="#fff" stroke-width="2.5"/></svg>
<div class="t" style="left:112.5px;top:856.30px;font-size:15px;line-height:15px;color:#1A69C8;font-weight:normal;letter-spacing:-0.938px;">C4996</div>
<div class="t" style="left:175.75px;top:846.30px;font-size:15px;line-height:15px;color:#1e1e1e;font-weight:normal;letter-spacing:-0.176px;">&#x27;strcpy&#x27;: This function or variable may be unsafe. Consider using strcpy_s instead. To disable</div>
<div class="t" style="left:175.75px;top:865.30px;font-size:15px;line-height:15px;color:#1e1e1e;font-weight:normal;letter-spacing:-0.543px;">deprecation, use _CRT_SECURE_NO_WARNINGS. See online help for details.</div>
<div class="t" style="left:836.25px;top:856.30px;font-size:15px;line-height:15px;color:#1e1e1e;font-weight:normal;letter-spacing:0.014px;">ConsoleApplication7</div>
<div class="t" style="left:1024.5px;top:856.30px;font-size:15px;line-height:15px;color:#1e1e1e;font-weight:normal;letter-spacing:-0.024px;">ConsoleApplication7.cpp</div>
<div class="t" style="left:1211.0px;top:856.30px;font-size:15px;line-height:15px;color:#1e1e1e;font-weight:normal;letter-spacing:-1.625px;">91</div>
<div style="left:41px;top:967px;width:70px;height:25px;background:#F7F8FE;"></div>
<div class="t" style="left:47.5px;top:973.30px;font-size:15px;line-height:15px;color:#1e1e1e;font-weight:normal;letter-spacing:-0.431px;">Error List</div>
<div style="left:113px;top:968px;width:58px;height:23px;background:#40508D;"></div>
<div class="t" style="left:119.25px;top:973.30px;font-size:15px;line-height:15px;color:#DDE2F5;font-weight:normal;letter-spacing:0.150px;">Output</div>
<div style="left:1447px;top:90px;width:433px;height:26px;background:#40508D;"></div>
<div class="t" style="left:1451.0px;top:96.30px;font-size:15px;line-height:15px;color:#FFFFFF;font-weight:normal;letter-spacing:-0.016px;">Solution Explorer</div>
<svg style="position:absolute;left:1818.0px;top:100px;" width="10" height="5.5" viewBox="0 0 10 5.5"><path d="M0 0H10L5.0 5.0Z" fill="#ADB8E0"/></svg>
<svg style="position:absolute;left:1838px;top:96px;" width="10" height="14" viewBox="0 0 10 14"><path d="M2.5 0.5H7.5V7.5H9.5V8.5H0.5V7.5H2.5Z" fill="none" stroke="#ADB8E0" stroke-width="1.1"/><path d="M5 8.5V13.5" stroke="#ADB8E0" stroke-width="1.3"/><rect x="5" y="1" width="2" height="6.5" fill="#ADB8E0"/></svg>
<svg style="position:absolute;left:1859px;top:98px;" width="12" height="10" viewBox="0 0 12 10"><path d="M0.5 0.5L11.5 9.5M11.5 0.5L0.5 9.5" stroke="#ADB8E0" stroke-width="1.5"/></svg>
<div style="left:1447px;top:116px;width:433px;height:36px;background:#CCD5F0;"></div>
<svg style="position:absolute;left:1457px;top:126px;" width="16" height="16" viewBox="0 0 16 16"><circle cx="8" cy="8" r="7.5" fill="#A8AEC4"/><path d="M4 8H12M4 8L7.5 4.5M4 8L7.5 11.5" stroke="#E2E5F0" stroke-width="2" fill="none"/></svg>
<svg style="position:absolute;left:1484px;top:126px;" width="16" height="16" viewBox="0 0 16 16"><circle cx="8" cy="8" r="7.5" fill="#A8AEC4"/><path d="M12 8H4M12 8L8.5 4.5M12 8L8.5 11.5" stroke="#E2E5F0" stroke-width="2" fill="none"/></svg>
<svg style="position:absolute;left:1509px;top:125px;" width="19" height="18" viewBox="0 0 19 18"><path d="M1 9L9.5 1L18 9" fill="none" stroke="#424242" stroke-width="1.6"/><path d="M3.5 8V17H15.5V8" fill="#D3D9EE" stroke="#424242" stroke-width="1.6"/><rect x="8" y="11" width="3" height="6" fill="#424242"/><path d="M15 2V6" stroke="#424242" stroke-width="1.4"/></svg>
<svg style="position:absolute;left:1536px;top:124px;" width="20" height="20" viewBox="0 0 20 20"><rect x="7.2" y="1" width="11.7" height="14.8" fill="#D6DCF2"/><path d="M7.2 7V1H18.9V15.8H11" fill="none" stroke="#3A3A3A" stroke-width="1.6"/><rect x="7.2" y="1" width="11.7" height="3.6" fill="#3A3A3A"/><path d="M11 7H17M12 9.5H17M12 12H17" stroke="#3A3A3A" stroke-width="1"/><g transform="translate(0.6,8.4) scale(0.43)"><path d="M18.4 0.9 L24.9 4.1 V21.6 L18.4 24.8 L9.6 15.7 L4.2 19.7 L1.1 18.2 V7.4 L4.2 5.9 L9.6 10 Z M12.8 12.8 L18.9 7.9 V18 Z M3.8 9.6 L6.9 12.9 L3.8 16.2 Z" fill="#7B3FC8" fill-rule="evenodd"/></g></svg>
<div style="left:1564px;top:121px;width:1px;height:24px;background:#A0A9C8;"></div>
<svg style="position:absolute;left:1576px;top:124px;" width="18" height="19" viewBox="0 0 18 19"><path d="M1 1H6L3.5 4Z" fill="#424242"/><path d="M3.5 3V6" stroke="#424242"/><circle cx="10" cy="11" r="6.5" fill="#D3D9EE" stroke="#424242" stroke-width="1.4"/><path d="M10 7V11.5H13" stroke="#424242" stroke-width="1.3" fill="none"/></svg>
<svg style="position:absolute;left:1601.0px;top:132px;" width="7" height="4.0" viewBox="0 0 7 4.0"><path d="M0 0H7L3.5 3.5Z" fill="#1e1e1e"/></svg>
<svg style="position:absolute;left:1617px;top:125px;" width="16" height="18" viewBox="0 0 16 18"><path d="M2 5H14M10 1L14 5L10 9M14 13H2M6 9L2 13L6 17" stroke="#424242" stroke-width="1.7" fill="none"/></svg>
<svg style="position:absolute;left:1644px;top:126px;" width="17" height="16" viewBox="0 0 17 16"><rect x="5.5" y="0.5" width="11" height="11" fill="#D3D9EE" stroke="#424242"/><rect x="3" y="3" width="11" height="11" fill="#D3D9EE" stroke="#424242"/><rect x="0.5" y="5.5" width="11" height="10" fill="#D3D9EE" stroke="#424242"/><path d="M3 10.5H9" stroke="#00539C" stroke-width="1.5"/></svg>
<svg style="position:absolute;left:1669px;top:124px;" width="20" height="20" viewBox="0 0 20 20"><rect x="0.5" y="0.5" width="13" height="15" rx="1" fill="#D3D9EE" stroke="#424242"/><rect x="5.5" y="5.5" width="13" height="14" rx="1" fill="#D3D9EE" stroke="#424242"/><path d="M8 10H16M8 13H16M8 16H16" stroke="#424242"/></svg>
<div style="left:1697px;top:121px;width:1px;height:24px;background:#A0A9C8;"></div>
<svg style="position:absolute;left:1707px;top:127px;" width="18" height="14" viewBox="0 0 18 14"><path d="M6 1L1 7L6 13M12 1L17 7L12 13" fill="none" stroke="#1e1e1e" stroke-width="1.8"/></svg>
<svg style="position:absolute;left:1733px;top:125px;" width="20" height="19" viewBox="0 0 20 19"><path d="M2 17L10 9" stroke="#1e1e1e" stroke-width="3.5" stroke-linecap="round"/><circle cx="13" cy="6" r="5" fill="#1e1e1e"/><path d="M13 6L19 0" stroke="#CCD5F0" stroke-width="3"/></svg>
<div style="left:1757px;top:119px;width:27px;height:29px;background:#FDEBC9;box-sizing:border-box;border:1px solid #E2B561;"></div>
<svg style="position:absolute;left:1760px;top:126px;" width="21" height="14" viewBox="0 0 21 14"><rect x="7" y="5" width="13" height="4" fill="#1e1e1e"/><path d="M1 9.5H20" stroke="#1e1e1e" stroke-width="1.3"/></svg>
<div style="left:1447px;top:152px;width:433px;height:28px;background:#C6D0EC;"></div>
<div style="left:1448px;top:152px;width:431px;height:25px;background:#FBFBFD;"></div>
<div class="t" style="left:1453.0px;top:158.30px;font-size:15px;line-height:15px;color:#717171;font-weight:normal;letter-spacing:-0.152px;">Search Solution Explorer (Ctrl+;)</div>
<svg style="position:absolute;left:1844px;top:156px;" width="18" height="16" viewBox="0 0 18 16"><circle cx="11" cy="6" r="4.2" fill="none" stroke="#424242" stroke-width="2"/><path d="M8 9L2.5 14.5" stroke="#424242" stroke-width="2.5" stroke-linecap="round"/></svg>
<svg style="position:absolute;left:1866.5px;top:162px;" width="7" height="4.0" viewBox="0 0 7 4.0"><path d="M0 0H7L3.5 3.5Z" fill="#424242"/></svg>
<div style="left:1447px;top:180px;width:433px;height:403px;background:#F7F8FE;"></div>
<div style="left:1447px;top:203px;width:433px;height:24px;background:#E6E7ED;"></div>
<svg style="position:absolute;left:1462px;top:183px;" width="20" height="20" viewBox="0 0 20 20"><path d="M2 8V2.8H18V15.9H11" fill="none" stroke="#424242" stroke-width="1.8"/><rect x="1.1" y="1" width="17.8" height="3.8" fill="#3A3A3A"/><g transform="translate(0.5,8.3) scale(0.45)"><path d="M18.4 0.9 L24.9 4.1 V21.6 L18.4 24.8 L9.6 15.7 L4.2 19.7 L1.1 18.2 V7.4 L4.2 5.9 L9.6 10 Z M12.8 12.8 L18.9 7.9 V18 Z M3.8 9.6 L6.9 12.9 L3.8 16.2 Z" fill="#8549C8" fill-rule="evenodd"/></g></svg>
<div class="t" style="left:1488.0px;top:185.30px;font-size:15px;line-height:15px;color:#1e1e1e;font-weight:normal;letter-spacing:0.071px;">Solution &#x27;ConsoleApplication7&#x27; (1 of 1 project)</div>
<svg style="position:absolute;left:1460px;top:211px;" width="9" height="9" viewBox="0 0 9 9"><path d="M8.5 0.5V8.5H0.5Z" fill="#1e1e1e"/></svg>
<svg style="position:absolute;left:1485px;top:208px;" width="19" height="16" viewBox="0 0 19 16"><rect x="0.5" y="0.5" width="18" height="15" fill="#E4E6F2" stroke="#B56FB5"/><path d="M5 5L12 12" stroke="#3a3a3a" stroke-width="1.3"/><path d="M5 2.5V8.5M2 5.5H8M12 8V14M9 11H15" stroke="#2a2a2a" stroke-width="2"/></svg>
<div class="t" style="left:1511.25px;top:208.30px;font-size:15px;line-height:15px;color:#1e1e1e;font-weight:bold;letter-spacing:-0.368px;">ConsoleApplication7</div>
<svg style="position:absolute;left:1483px;top:233px;" width="8" height="12" viewBox="0 0 8 12"><path d="M1 1L6.5 6L1 11Z" fill="none" stroke="#1e1e1e" stroke-width="1.3"/></svg>
<svg style="position:absolute;left:1508px;top:234px;" width="19" height="10" viewBox="0 0 19 10"><rect x="0" y="2" width="5" height="5" fill="#424242"/><path d="M5 4.5H9" stroke="#424242" stroke-width="1.3"/><rect x="10" y="0.5" width="8" height="8" fill="#424242"/></svg>
<div class="t" style="left:1533.75px;top:231.30px;font-size:15px;line-height:15px;color:#1e1e1e;font-weight:normal;letter-spacing:-0.639px;">References</div>
<svg style="position:absolute;left:1483px;top:256px;" width="8" height="12" viewBox="0 0 8 12"><path d="M1 1L6.5 6L1 11Z" fill="none" stroke="#1e1e1e" stroke-width="1.3"/></svg>
<svg style="position:absolute;left:1509px;top:255px;" width="18" height="18" viewBox="0 0 18 18"><path d="M1 3H6L7.5 1.5H15V13H1Z" fill="#C8A165"/><path d="M1 5H15V15H1Z" fill="#DCB67A"/><rect x="8" y="9.5" width="8" height="8" fill="#fff" stroke="#1BA1E2"/><path d="M10 15L14 11M11 11H14V14" stroke="#1BA1E2" fill="none"/></svg>
<div class="t" style="left:1533.75px;top:254.30px;font-size:15px;line-height:15px;color:#1e1e1e;font-weight:normal;letter-spacing:-0.256px;">External Dependencies</div>
<svg style="position:absolute;left:1509px;top:278px;" width="17" height="18" viewBox="0 0 17 18"><path d="M3 3H8L9.5 1.5H16V13H3Z" fill="#C8A165"/><path d="M3 5H16V15H3Z" fill="#DCB67A"/><path d="M0 12H6L3.5 14.5V17H2.5V14.5Z" fill="#1e1e1e"/></svg>
<div class="t" style="left:1533.75px;top:277.30px;font-size:15px;line-height:15px;color:#1e1e1e;font-weight:normal;letter-spacing:-0.341px;">Header Files</div>
<svg style="position:absolute;left:1509px;top:301px;" width="17" height="18" viewBox="0 0 17 18"><path d="M3 3H8L9.5 1.5H16V13H3Z" fill="#C8A165"/><path d="M3 5H16V15H3Z" fill="#DCB67A"/><path d="M0 12H6L3.5 14.5V17H2.5V14.5Z" fill="#1e1e1e"/></svg>
<div class="t" style="left:1533.75px;top:300.30px;font-size:15px;line-height:15px;color:#1e1e1e;font-weight:normal;letter-spacing:-0.635px;">Resource Files</div>
<svg style="position:absolute;left:1483px;top:325px;" width="8" height="12" viewBox="0 0 8 12"><path d="M1 1L6.5 6L1 11Z" fill="none" stroke="#1e1e1e" stroke-width="1.3"/></svg>
<svg style="position:absolute;left:1509px;top:324px;" width="17" height="18" viewBox="0 0 17 18"><path d="M3 3H8L9.5 1.5H16V13H3Z" fill="#C8A165"/><path d="M3 5H16V15H3Z" fill="#DCB67A"/><path d="M0 12H6L3.5 14.5V17H2.5V14.5Z" fill="#1e1e1e"/></svg>
<div class="t" style="left:1533.75px;top:323.30px;font-size:15px;line-height:15px;color:#1e1e1e;font-weight:normal;letter-spacing:-0.580px;">Source Files</div>
<div style="left:1447px;top:583px;width:126px;height:24px;background:#F7F8FE;"></div>
<div class="t" style="left:1453.0px;top:588.30px;font-size:15px;line-height:15px;color:#1e1e1e;font-weight:normal;letter-spacing:-0.016px;">Solution Explorer</div>
<div style="left:1574px;top:583px;width:93px;height:23px;background:#40508D;"></div>
<div class="t" style="left:1581.25px;top:588.30px;font-size:15px;line-height:15px;color:#DDE2F5;font-weight:normal;letter-spacing:-0.463px;">Git Changes</div>
<div style="left:1447px;top:617px;width:433px;height:27px;background:#40508D;"></div>
<div class="t" style="left:1451.25px;top:623.30px;font-size:15px;line-height:15px;color:#FFFFFF;font-weight:normal;letter-spacing:-0.181px;">Properties</div>
<svg style="position:absolute;left:1818.0px;top:627px;" width="10" height="5.5" viewBox="0 0 10 5.5"><path d="M0 0H10L5.0 5.0Z" fill="#ADB8E0"/></svg>
<svg style="position:absolute;left:1838px;top:623px;" width="10" height="14" viewBox="0 0 10 14"><path d="M2.5 0.5H7.5V7.5H9.5V8.5H0.5V7.5H2.5Z" fill="none" stroke="#ADB8E0" stroke-width="1.1"/><path d="M5 8.5V13.5" stroke="#ADB8E0" stroke-width="1.3"/><rect x="5" y="1" width="2" height="6.5" fill="#ADB8E0"/></svg>
<svg style="position:absolute;left:1859px;top:624px;" width="12" height="11" viewBox="0 0 12 11"><path d="M0.5 0.5L11.5 10.5M11.5 0.5L0.5 10.5" stroke="#ADB8E0" stroke-width="1.4"/></svg>
<div style="left:1447px;top:644px;width:433px;height:348px;background:#F7F8FE;"></div>
<div style="left:1447px;top:644px;width:433px;height:29px;background:#FBFBFD;"></div>
<svg style="position:absolute;left:1866.5px;top:657px;" width="7" height="4.0" viewBox="0 0 7 4.0"><path d="M0 0H7L3.5 3.5Z" fill="#1e1e1e"/></svg>
<div style="left:1448px;top:673px;width:431px;height:31px;background:#CCD5F0;"></div>
<div style="left:1450px;top:674px;width:29px;height:28px;background:#FDEBC9;box-sizing:border-box;border:1px solid #E2B561;"></div>
<svg style="position:absolute;left:1455px;top:679px;" width="20" height="18" viewBox="0 0 20 18"><rect x="0.5" y="0.5" width="5" height="5" fill="#fff" stroke="#1e1e1e"/><rect x="0.5" y="10.5" width="5" height="5" fill="#fff" stroke="#1e1e1e"/><path d="M2 3H4M2 13H4" stroke="#1e1e1e"/><path d="M8 1H19M8 3.5H19M8 6H19M8 8.5H19M8 11H15M8 13.5H15M17 13.5H19" stroke="#1e1e1e" stroke-width="1.2"/></svg>
<svg style="position:absolute;left:1483px;top:677px;" width="20" height="22" viewBox="0 0 20 22"><rect x="0" y="0" width="10" height="10" fill="#424242"/><path d="M2.5 8.5L5 1.5L7.5 8.5M3.5 6H6.5" stroke="#fff" stroke-width="1.1" fill="none"/><rect x="0" y="11" width="10" height="10" fill="#424242"/><path d="M2.5 13H7.5L2.5 19H7.5" stroke="#fff" stroke-width="1.3" fill="none"/><path d="M14 3V16M10.5 12.5L14 17L17.5 12.5" stroke="#00539C" stroke-width="2.2" fill="none"/></svg>
<div style="left:1511px;top:677px;width:1px;height:22px;background:#A0A9C8;"></div>
<svg style="position:absolute;left:1518px;top:678px;" width="21" height="21" viewBox="0 0 21 21"><path d="M2 19L10 11" stroke="#A8AEC4" stroke-width="3.5" stroke-linecap="round"/><circle cx="13" cy="8" r="5.5" fill="#A8AEC4"/><path d="M13 8L19.5 1.5" stroke="#CCD5F0" stroke-width="3"/></svg>
<div style="left:1447px;top:913px;width:433px;height:1px;background:#EDEEF4;"></div>
<div style="left:1912px;top:89px;width:8px;height:110px;background:#3F5287;"></div>
<div class="t" style="left:1888px;top:90.0px;writing-mode:vertical-rl;font-size:15px;line-height:20px;color:#F0F2FA;letter-spacing:0.000px;">Diagnostic Tools</div>
<div style="left:0px;top:1000px;width:1920px;height:30px;background:#40508D;"></div>
<div style="left:0px;top:1030px;width:1920px;height:1px;background:#1A1A1A;"></div>
<div style="left:492px;top:1030px;width:61px;height:1px;background:#4A4A4A;"></div>
<svg style="position:absolute;left:5px;top:1008px;" width="20" height="15" viewBox="0 0 20 15"><path d="M3.5 1H19L16.5 14H1Z" fill="none" stroke="#E8ECF8" stroke-width="1.4"/><path d="M5 4H12" stroke="#E8ECF8" stroke-width="1.4"/></svg>
<div class="t" style="left:35.0px;top:1008.30px;font-size:15px;line-height:15px;color:#FFFFFF;font-weight:normal;letter-spacing:-0.531px;">Ready</div>
<svg style="position:absolute;left:1657px;top:1007px;" width="13" height="16" viewBox="0 0 13 16"><path d="M6.5 15V2M1 7L6.5 1.5L12 7" stroke="#E8ECF8" stroke-width="2" fill="none"/></svg>
<div class="t" style="left:1681.3px;top:1008.30px;font-size:15px;line-height:15px;color:#FFFFFF;font-weight:normal;letter-spacing:-0.021px;">Add to Source Control</div>
<svg style="position:absolute;left:1837px;top:1012px;" width="11" height="7" viewBox="0 0 11 7"><path d="M0 6.5L5.5 0.5L11 6.5Z" fill="#FFFFFF"/></svg>
<svg style="position:absolute;left:1870px;top:1005px;" width="28" height="24" viewBox="0 0 28 24"><path d="M4 16C6 14 6 12 6 8C6 4 9 2 11.5 2C14 2 17 4 17 8C17 12 17 14 19 16Z" fill="#C9CFE6"/><rect x="9.5" y="16" width="4" height="3" fill="#C9CFE6"/><circle cx="20" cy="15" r="7.5" fill="#E51400"/><text x="20" y="19.5" text-anchor="middle" font-family="Liberation Sans" font-size="12" font-weight="bold" fill="#fff">1</text></svg>
</body></html>
